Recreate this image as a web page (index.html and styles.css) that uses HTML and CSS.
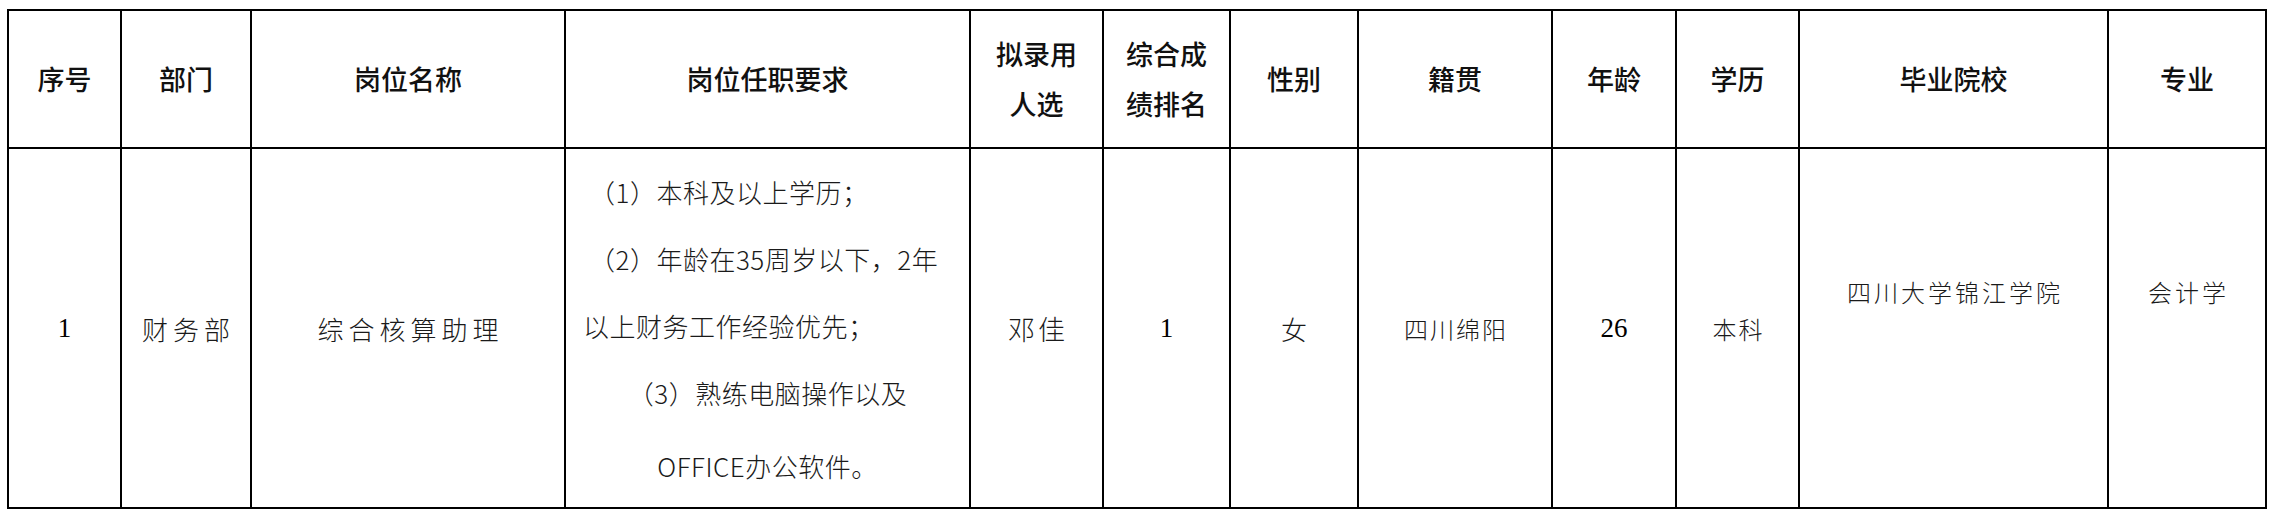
FILE: index.html
```html
<!DOCTYPE html>
<html lang="zh-CN">
<head>
<meta charset="utf-8">
<title>拟录用人选</title>
<link rel="stylesheet" href="styles.css">
</head>
<body>
<table class="sheet">
  <colgroup>
    <col class="c1"><col class="c2"><col class="c3"><col class="c4"><col class="c5"><col class="c6">
    <col class="c7"><col class="c8"><col class="c9"><col class="c10"><col class="c11"><col class="c12">
  </colgroup>
  <thead>
    <tr class="head">
      <th>序号</th>
      <th>部门</th>
      <th>岗位名称</th>
      <th>岗位任职要求</th>
      <th><div class="two one">拟录用</div><div class="two">人选</div></th>
      <th><div class="two one">综合成</div><div class="two">绩排名</div></th>
      <th>性别</th>
      <th>籍贯</th>
      <th>年龄</th>
      <th>学历</th>
      <th>毕业院校</th>
      <th>专业</th>
    </tr>
  </thead>
  <tbody>
    <tr class="body">
      <td class="num">1</td>
      <td class="wide">财务部</td>
      <td class="wide">综合核算助理</td>
      <td class="req">
        <div class="line l1">（1）本科及以上学历；</div>
        <div class="line l1">（2）年龄在35周岁以下，2年</div>
        <div class="line l3">以上财务工作经验优先；</div>
        <div class="line mid">（3）熟练电脑操作以及</div>
        <div class="line mid last">OFFICE办公软件。</div>
      </td>
      <td class="name">邓佳</td>
      <td class="num">1</td>
      <td class="sex">女</td>
      <td class="small s2">四川绵阳</td>
      <td class="num">26</td>
      <td class="small s2">本科</td>
      <td class="small s3 raised">四川大学锦江学院</td>
      <td class="small s3 raised">会计学</td>
    </tr>
  </tbody>
</table>
</body>
</html>
```

FILE: styles.css
```css
html, body {
  margin: 0;
  padding: 0;
  background: #ffffff;
}

body {
  padding: 9px 0 0 7px;
  font-family: "Liberation Serif", "Noto Sans CJK SC", serif;
  color: #000;
}

.sheet {
  border-collapse: collapse;
  table-layout: fixed;
  width: 2260px;
}

.c1 { width: 113px; }
.c2 { width: 130px; }
.c3 { width: 314px; }
.c4 { width: 405px; }
.c5 { width: 133px; }
.c6 { width: 127px; }
.c7 { width: 128px; }
.c8 { width: 194px; }
.c9 { width: 124px; }
.c10 { width: 123px; }
.c11 { width: 309px; }
.c12 { width: 158px; }

.sheet th,
.sheet td {
  border: 2px solid #000;
  padding: 0;
  text-align: center;
  vertical-align: middle;
}

.head {
  height: 138px;
}

.head th {
  font-family: "Noto Sans CJK SC", sans-serif;
  font-size: 27px;
  font-weight: 500;
  line-height: 34px;
  color: #111;
}

.two {
  line-height: 50px;
}

.body {
  height: 360px;
}

.body td {
  font-family: "Noto Sans CJK SC", sans-serif;
  font-weight: 300;
  color: #1a1a1a;
}

.body td.num {
  font-family: "Liberation Serif", serif;
  font-size: 27px;
  font-weight: 400;
  color: #000;
}

.wide {
  font-size: 26px;
  letter-spacing: 5px;
  padding-left: 5px !important;
}

.name {
  font-size: 27px;
  letter-spacing: 3px;
  padding-left: 3px !important;
}

.sex {
  font-size: 26px;
}

.small {
  font-size: 24px;
}

.s2 {
  letter-spacing: 2px;
  padding-left: 2px !important;
}

.s3 {
  letter-spacing: 3px;
  padding-left: 3px !important;
}

.raised {
  padding-bottom: 74px !important;
}

.req {
  font-size: 26px;
  letter-spacing: 0.5px;
}

.line {
  line-height: 67px;
  white-space: nowrap;
}

.l1 {
  text-align: left;
  padding-left: 23px;
}

.l3 {
  text-align: left;
  padding-left: 17px;
}

.mid {
  text-align: center;
}

.last {
  margin-top: 6px;
}
```
